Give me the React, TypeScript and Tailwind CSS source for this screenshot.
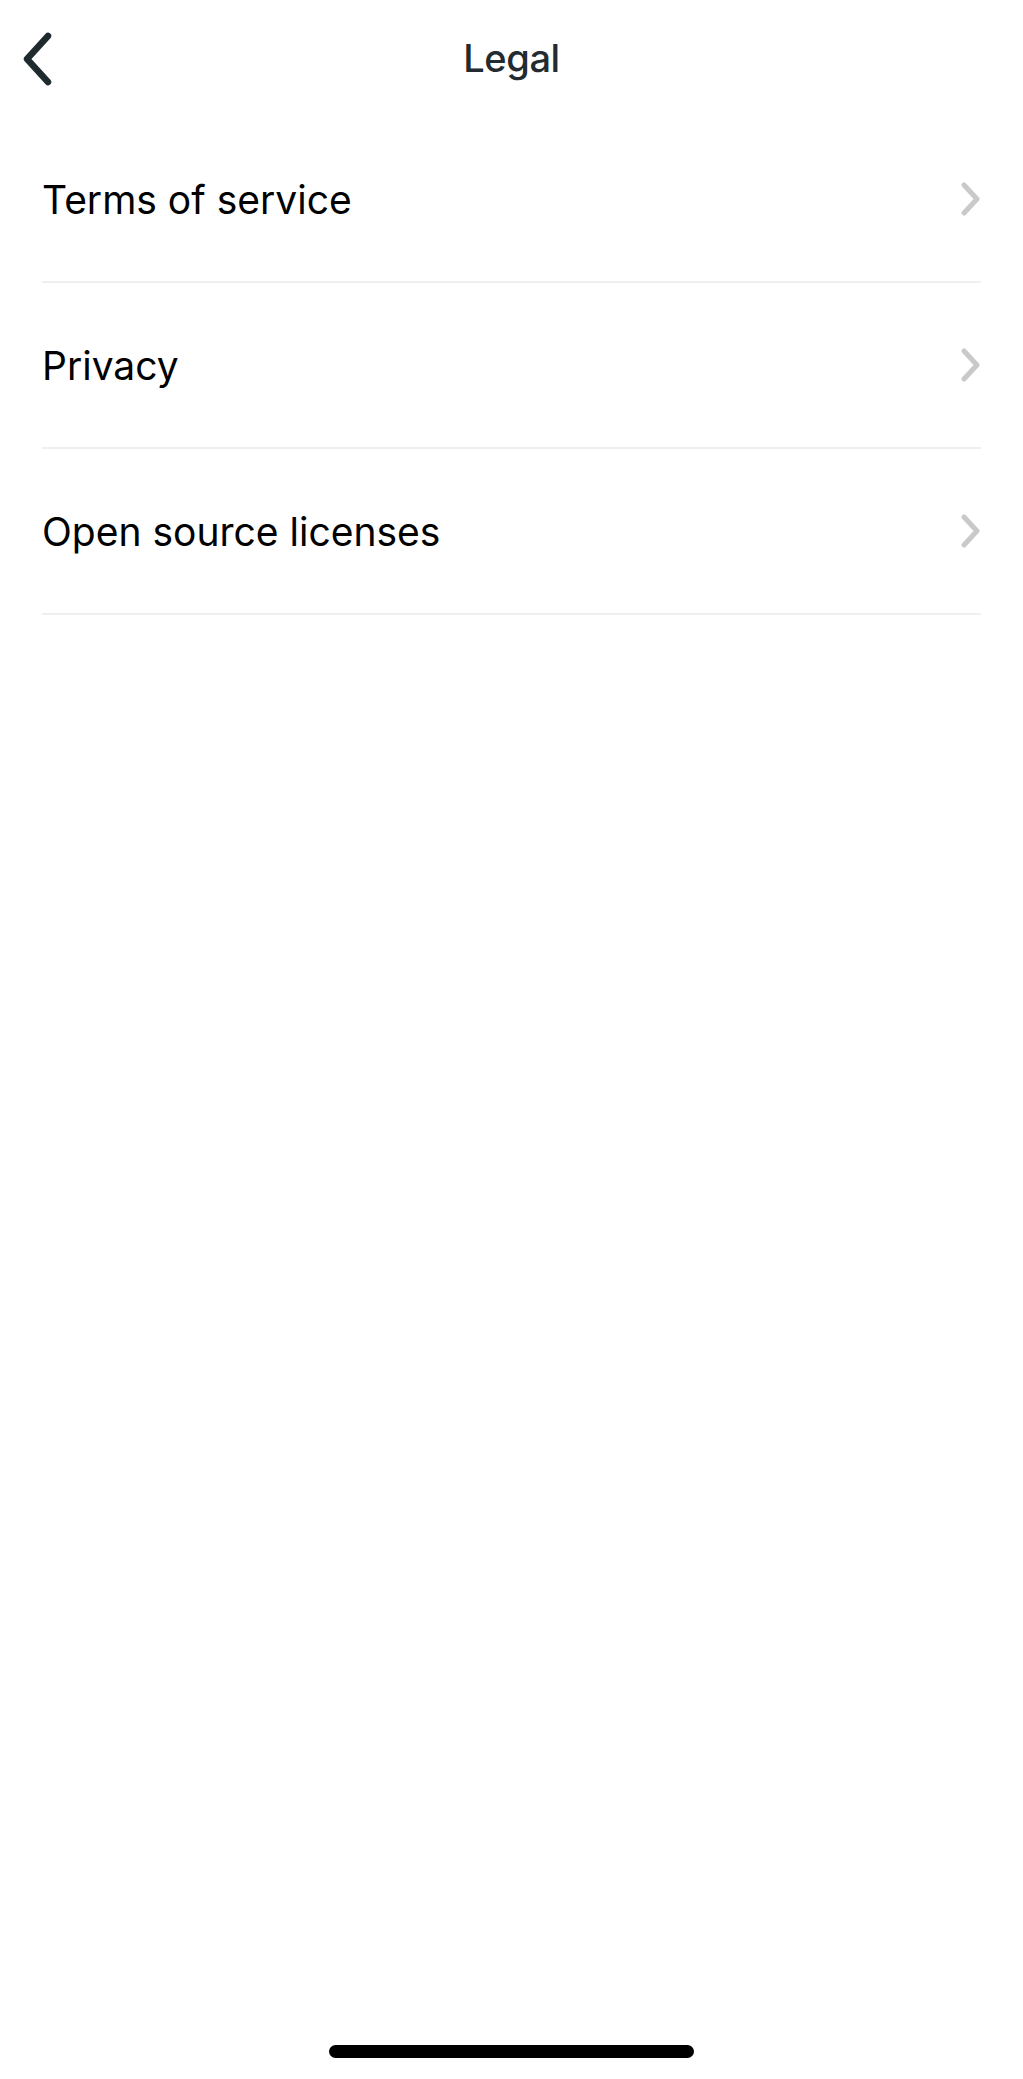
import React from 'react';

const items = ['Terms of service', 'Privacy', 'Open source licenses'];

function BackIcon() {
  return (
    <svg width="34" height="56" viewBox="0 0 34 56" fill="none">
      <path d="M28 5 L7 28 L28 51" stroke="#1f2a2e" strokeWidth="6.5" strokeLinecap="round" strokeLinejoin="round" />
    </svg>
  );
}

function ChevronRight() {
  return (
    <svg width="20" height="36" viewBox="0 0 20 36" fill="none">
      <path d="M3 4 L16 18 L3 32" stroke="#c9c9c9" strokeWidth="5" strokeLinecap="round" strokeLinejoin="round" />
    </svg>
  );
}

export default function App() {
  return (
    <div className="flex min-h-[2079px] w-full flex-col bg-white" style={{ fontFamily: 'Inter, "Noto Sans", sans-serif' }}>
      {/* Header */}
      <header className="grid h-[117px] grid-cols-[1fr_auto_1fr] items-center px-[20px]">
        <button className="flex items-center justify-start">
          <BackIcon />
        </button>
        <h1 className="text-[38px] font-medium tracking-[-0.01em] text-[#222b2f]">Legal</h1>
        <div />
      </header>

      {/* List */}
      <ul className="px-[42px]">
        {items.map((label) => (
          <li key={label} className="flex h-[166px] items-center justify-between border-b-2 border-[#efefef]">
            <span className="text-[39px] leading-none text-black">{label}</span>
            <ChevronRight />
          </li>
        ))}
      </ul>

      <div className="flex-1" />

      {/* Home indicator */}
      <div className="flex justify-center pb-[21px]">
        <div className="h-[13px] w-[365px] rounded-full bg-black" />
      </div>
    </div>
  );
}
